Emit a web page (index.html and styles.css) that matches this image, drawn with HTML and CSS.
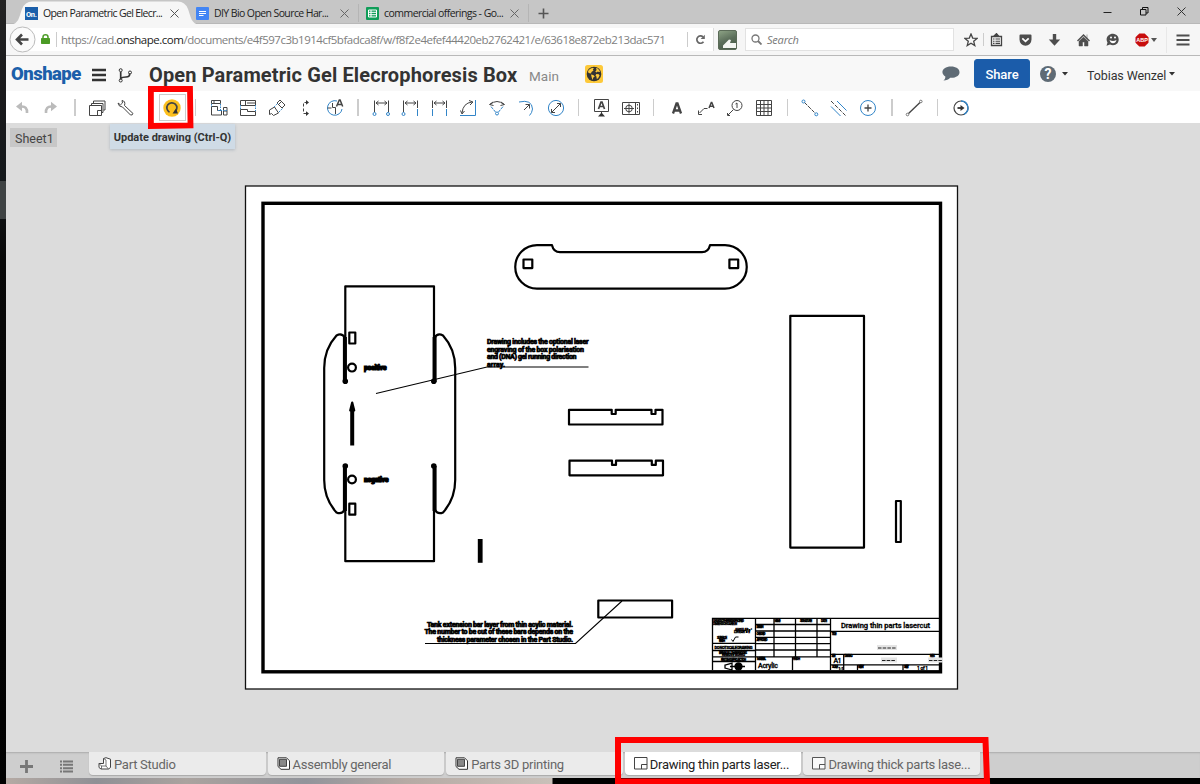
FILE: index.html
```html
<!DOCTYPE html>
<html lang="en">
<head>
<meta charset="utf-8">
<title>Open Parametric Gel Elecrophoresis Box</title>
<link rel="stylesheet" href="styles.css">
</head>
<body>
<div class="desktop">
<div class="edge"><div class="edge-light"></div></div>
<div class="window">
  <div class="tabstrip">
    <svg class="tabshape" width="190" height="25" viewBox="0 0 190 25"><path d="M0 25C9 24 9 17 12 9Q15 1.500 22 1.500H168Q175 1.500 178 9C181 17 181 24 190 25Z" fill="#f6f6f6"/></svg>
    <div class="btab first"><svg width="13" height="13"><rect width="13" height="13" fill="#1b5faa"/><text x="1" y="10" class="favtext">On.</text></svg><span class="t1">Open Parametric Gel Elecr...</span><svg class="x" width="9" height="9"><path d="M.5.5l8 8m0-8l-8 8" stroke="#555" fill="none"/></svg></div>
    <div class="btab second"><svg width="13" height="13"><rect width="13" height="13" rx="1" fill="#4285f4"/><path d="M3 4.500h7M3 6.500h7M3 8.500h4.500" stroke="#fff"/></svg><span class="t2">DIY Bio Open Source Har...</span><svg class="x" width="9" height="9"><path d="M.5.5l8 8m0-8l-8 8" stroke="#666" fill="none"/></svg></div>
    <i class="tabsep"></i>
    <div class="btab third"><svg width="13" height="13"><rect width="13" height="13" rx="1" fill="#0f9d58"/><path d="M2.500 3h8v7h-8zM2.500 5.300h8M2.500 7.700h8M5 3v7" stroke="#fff" fill="none"/></svg><span class="t3">commercial offerings - Go...</span><svg class="x" width="9" height="9"><path d="M.5.5l8 8m0-8l-8 8" stroke="#666" fill="none"/></svg></div>
    <i class="tabsep"></i>
    <svg class="plus" width="11" height="11"><path d="M5.500 .5v10M.5 5.500h10" stroke="#555" stroke-width="1.600"/></svg>
    <div class="wincontrols">
      <svg width="9" height="9"><path d="M.5 5.500h8" stroke="#222"/></svg>
      <svg width="9" height="9"><path d="M.5 2.500h5.500v5.500H.5zM2.500 2.500V.5h5.500V6H6" stroke="#111" fill="none"/></svg>
      <svg width="9" height="9"><path d="M.5.5l8 8m0-8l-8 8" stroke="#333"/></svg>
    </div>
  </div>
  <div class="navbar">
    <div class="urlbox">
      <svg class="back" width="27" height="27" viewBox="0 0 27 27"><circle cx="13.500" cy="13.500" r="12.500" fill="#fbfbfb" stroke="#bbb"/><path d="M19.500 13.500H9M13 8.500l-5 5 5 5" fill="none" stroke="#444" stroke-width="2.600"/></svg>
      <svg class="lock" width="9" height="11"><path d="M2 5V3a2.500 2.200 0 0 1 5 0v2" fill="none" stroke="#4b9b25" stroke-width="1.500"/><rect y="4" width="9" height="6" rx=".7" fill="#4b9b25"/></svg>
      <i class="bar"></i>
      <span class="url">https://cad.<b>onshape.com</b>/documents/e4f597c3b1914cf5bfadca8f/w/f8f2e4efef44420eb2762421/e/63618e872eb213dac571</span>
      <i class="bar urlend"></i>
      <svg class="reload" width="11" height="11" viewBox="0 0 11 11"><path d="M8.500 7.800A3.700 3.700 0 1 1 8 2.800" fill="none" stroke="#666" stroke-width="1.700"/><path d="M9.800 .8V5H5.600z" fill="#666"/></svg>
    </div>
    <svg class="thumb" width="19" height="20"><defs><linearGradient id="g" x2=".4" y2="1"><stop stop-color="#8fa587"/><stop offset=".6" stop-color="#5b6e5a"/><stop offset="1" stop-color="#4c5f4c"/></linearGradient></defs><rect x=".5" y=".5" width="18" height="19" rx="1.500" fill="url(#g)" stroke="#5b6b58"/><path d="M5 18v-2.500l6-6 2 .5-1 3h6v5z" fill="#f4f6f2"/></svg>
    <div class="search"><svg width="11" height="11"><circle cx="4.500" cy="4.500" r="3.500" fill="none" stroke="#777" stroke-width="1.300"/><path d="M7 7l3.500 3.500" stroke="#777" stroke-width="1.800"/></svg><em>Search</em></div>
    <div class="navicons">
      <svg viewBox="0 0 14 14"><path d="M7 1l1.700 4.100 4.300.3-3.300 2.900 1.100 4.300L7 10.300l-3.800 2.300 1.100-4.300L1 5.400l4.300-.3z" fill="none" stroke="#444" stroke-width="1.300"/></svg>
      <i class="bar"></i>
      <svg viewBox="0 0 14 14"><path d="M1.500 3.500h10v9h-10z" fill="none" stroke="#444" stroke-width="1.300"/><path d="M4 3L6.500 .5 9 3.500H4zM3 6h1.500M5.500 6H10M3 8.200h1.500M5.500 8.200H10M3 10.400h1.500M5.500 10.400H10" stroke="#444" fill="#444" stroke-width="1.100"/></svg>
      <svg viewBox="0 0 14 14"><path d="M.5 2.500q0-1 1-1h10q1 0 1 1v4a6 6.200 0 0 1-12 0z" fill="#4d4d4d"/><path d="M3.300 5.300L6.500 8.400l3.200-3.100" fill="none" stroke="#fff" stroke-width="1.700"/></svg>
      <svg viewBox="0 0 14 14"><path d="M4.800 1h3.400v5.500h4L6.500 12.800.8 6.500h4z" fill="#4d4d4d"/></svg>
      <svg viewBox="0 0 14 14"><path d="M.5 8L6.500 2l6 6" fill="none" stroke="#4d4d4d" stroke-width="1.400"/><path d="M10 1.500v4M2 8.300L6.500 4 11 8.300V13H7.500V9h-2v4H2z" fill="#4d4d4d" stroke="#4d4d4d" stroke-width=".5"/></svg>
      <svg viewBox="0 0 14 14"><path d="M7 .8c8 .7 7.200 11.400 0 11.400-1 0-2-.2-3-.7L.5 12.700l1-3.100C-1 5.500 2 .8 7 .8z" fill="#4d4d4d"/><circle cx="5" cy="4.500" r="1" fill="#fff"/><circle cx="9" cy="4.500" r="1" fill="#fff"/><path d="M3.500 7q3.500 2 7 0-1 3.300-3.500 3.300T3.500 7z" fill="#fff"/></svg>
      <svg class="abp" viewBox="0 0 14 14"><path d="M4.300.5h5.400L13.500 4.300v5.400L9.700 13.500H4.300L.5 9.700V4.300z" fill="#c70d0d"/><text x="7" y="9.300" class="abptext">ABP</text></svg>
      <svg class="caret" viewBox="0 0 6 4"><path d="M0 0h6L3 4z" fill="#555"/></svg>
      <i class="bar faint"></i>
      <svg class="burger" viewBox="0 0 14 14"><path d="M.5 2.500h13M.5 7h13M.5 11.500h13" stroke="#4d4d4d" stroke-width="2.200"/></svg>
    </div>
  </div>
  <div class="header">
    <span class="brand">Onshape</span>
    <svg class="hburger" width="14" height="14"><path d="M0 2h14M0 7h14M0 12h14" stroke="#333" stroke-width="2.400"/></svg>
    <svg class="branch" width="15" height="15" viewBox="0 0 15 15"><path d="M2.700 4v7.500M2.700 10.500Q4 9 8 9t3.600-3.500" stroke="#333" stroke-width="1.700" fill="none"/><circle cx="2.700" cy="2.200" r="1.500" fill="none" stroke="#333"/><circle cx="2.700" cy="12.500" r="1.500" fill="none" stroke="#333"/><circle cx="12" cy="4.500" r="1.500" fill="none" stroke="#333"/></svg>
    <h1>Open Parametric Gel Elecrophoresis Box</h1>
    <span class="branchname">Main</span>
    <svg class="globe" width="18" height="18" viewBox="0 0 18 18"><rect width="18" height="18" rx="2.500" fill="#fdc93a"/><circle cx="9" cy="9" r="7.300" fill="#333"/><path d="M3 6Q4.500 3.500 7.500 2.700L9 3.500 7.800 4.500 8.500 5.500 6.500 7 6 8.500 4.800 8.300 3.500 8zM11 3l1.800.5 2.400 3-1.200.5-1.200-.6-1.300 1-1.200-1 1.300-1.400zM6 9.600l2.300.5 1.500 1.300-1.500 1.200L7.600 15l-.9-2.500zM11.300 9l2.500.2.800 1.200-1.600 3-1.300.3-.3-2.300-.9-1z" fill="#fdc93a"/></svg>
    <div class="account">
      <svg class="bubble" width="18" height="15" viewBox="0 0 18 15"><path d="M9 .5c5 0 8.500 2.300 8.500 5.700s-4 6-9.300 5.500C6.500 13.500 4.500 14.500 1.500 14.500c1.300-1 2-2.500 1.800-4C-2.500 6.500 1 .5 9 .5z" fill="#5f6b75"/></svg>
      <button class="share">Share</button>
      <svg class="help" width="16" height="16"><circle cx="8" cy="8" r="8" fill="#5f6b75"/><text x="8" y="13" class="q">?</text></svg>
      <svg class="c1" width="6" height="4"><path d="M0 0h6L3 3.500z" fill="#333"/></svg>
      <span class="user">Tobias Wenzel</span>
      <svg class="c2" width="6" height="4"><path d="M0 0h6L3 3.500z" fill="#333"/></svg>
    </div>
  </div>
  <div class="toolbar">
    <div class="tool"><svg class="ic dim"><path d="M12 11.500Q18.500 11 18 18" stroke-width="2.600"/><path d="M7 11.500l6-4.800v9.600z" fill="#bbb" stroke="none"/></svg></div>
    <div class="tool"><svg class="ic dim"><path d="M14 11.500Q7.500 11 8 18" stroke-width="2.600"/><path d="M19 11.500l-6-4.800v9.600z" fill="#bbb" stroke="none"/></svg></div>
    <i class="sep"></i>
    <div class="tool"><svg class="ic"><path d="M5.500 10.500h12v10h-12zM7.500 10V8.500h11.500v9H18M9.500 8V6h11.500v9h-1.500M13.500 20v-4.500h4"/></svg></div>
    <div class="tool"><svg class="ic"><path d="M11.500 10.500l8.500 8q-.5 2-2.500 1.500L9.500 12q-3.800 0-4.500-4l2.500 1.800 2-1.800L9 5.500q3.800.5 2.500 5z"/></svg></div>
    <i class="sep"></i>
    <div class="tool"><div class="pressed"><svg class="ic"><circle cx="13" cy="13" r="8.700" fill="#fdc01e" stroke="none"/><path d="M10.500 17.200A5 5 0 1 1 16 16.700" stroke-width="1.700"/><path d="M13.500 18.500h5.500L17 13.500z" fill="#333" stroke="none"/></svg></div></div>
    <i class="sep"></i>
    <div class="tool"><svg class="ic"><path d="M5.500 5.500h9v3h-9zM8 5.500v3M5.500 11.500h6v4h4v4.500h-10zM17.500 12.500h3.500v7.500h-3.500zM17.500 16h3.500"/><path class="bl" d="M5.500 9v3M14.500 9v6.500M12 15.500h9"/></svg></div>
    <div class="tool"><svg class="ic"><path d="M5.500 5.500h15v5h-15zM10.500 5.500v5M12 8h8M5.500 14.500h7v2h8v4h-15z"/><path class="bl" d="M5.500 10v5M20.500 10v6"/></svg></div>
    <div class="tool"><svg class="ic"><path d="M5.500 15l5-3 4 6-5 2.500-2-2-2 1zM13 8l3-3 5 5-3 3zM14 10l3-3"/><path class="bl" d="M10 12l4-4M15 17l4-4"/></svg></div>
    <div class="tool"><svg class="ic"><path d="M14.500 7.500h-4v11h4" stroke-dasharray="3 2"/><path d="M13 5l3 2.500-3 2.300zM13 16.200l3 2.300-3 2.500z" fill="#333" stroke="none"/></svg></div>
    <div class="tool"><svg class="ic"><path class="bl2" d="M15 6A7.300 7.300 0 1 0 20 14"/><path d="M5.500 13h4M10.500 8v4.500h3v6.500"/><path d="M14.500 11.500L17.300 5h.8l2.600 6.500M15.500 9.500h4" stroke-width="1.500"/></svg></div>
    <i class="sep"></i>
    <div class="tool"><svg class="ic"><path d="M6.500 17V5.500M20.500 17V5.500M8 8h11M10.500 6L8 8l2.500 2M16.500 6L19 8l-2.500 2"/><circle class="bl2" cx="6.500" cy="19" r="1.500"/><circle class="bl2" cx="20" cy="19" r="1.500"/></svg></div>
    <div class="tool"><svg class="ic"><path d="M6.500 17V5.500M20.500 13V5.500M8 8h11M10.500 6L8 8l2.500 2M16.500 6L19 8l-2.500 2"/><path class="bl2" d="M20.500 14v7"/><circle class="bl2" cx="6.500" cy="19" r="1.500"/></svg></div>
    <div class="tool"><svg class="ic"><path d="M6.500 13V5.500M20.500 13V5.500M8 8h11M10.500 6L8 8l2.500 2M16.500 6L19 8l-2.500 2"/><path class="bl2" d="M6.500 14v7M20.500 14v7"/></svg></div>
    <div class="tool"><svg class="ic"><path d="M7 18Q8 8 17 7M14 5.500L18 7l-3 3M5.500 15.500L7 19l2.500-3"/><path class="bl2" d="M5 20.500h15.500V5"/></svg></div>
    <div class="tool"><svg class="ic"><path d="M6 9.500Q13 3.500 20 9.500M9 7L5.500 9.500l4 1M17 7l3.500 2.500-4 1"/><circle class="bl2" cx="13" cy="18.500" r="1.500"/><path class="bl2" d="M11.500 17L6.500 11M14.500 17l5-6" stroke-dasharray="3 1"/></svg></div>
    <div class="tool"><svg class="ic"><path class="bl2" d="M6 7Q19 4 19.500 14 19 18 16.500 20.500"/><path d="M11 15l5.500-5.500M12.500 9.500h4v4"/></svg></div>
    <div class="tool"><svg class="ic"><circle class="bl2" cx="13" cy="13" r="7.600"/><path d="M8.500 17.500l9-9M14 8.500h3.500V12M8.500 14v3.500H12"/></svg></div>
    <i class="sep"></i>
    <div class="tool"><svg class="ic"><path d="M5.500 4.500h14v12h-14zM12.500 16v2"/><path d="M9 21.500l3.500-4 3.500 4z" fill="#333" stroke="none"/><path d="M9.500 14L12 7h1l2.500 7M10.500 11.500h4" stroke-width="1.700"/></svg></div>
    <div class="tool"><svg class="ic"><path d="M4.500 7.500h17v12h-17zM17.500 7.500v12"/><circle cx="11" cy="13.500" r="3.300"/><path d="M6 13.500h10M11 8.500v10" /><path d="M19.500 9v9" stroke-dasharray="1.500 2"/></svg></div>
    <i class="sep"></i>
    <div class="tool"><svg class="ic"><path d="M9 18.500L12.500 8.500h1L17 18.500M10.500 15.500h5" stroke-width="2.300"/></svg></div>
    <div class="tool"><svg class="ic"><path d="M6.500 18l4.500-4.500h3.500M5.500 15.500v4H9"/><path d="M16 13l2.300-5.500h.5L21 13M17 11.300h3" stroke-width="1.500"/></svg></div>
    <div class="tool"><svg class="ic"><circle cx="15" cy="10.500" r="5"/><path d="M11.500 14.500L6 20M15 13V8l-1.500 1M5.500 18v2.500H8"/></svg></div>
    <div class="tool"><svg class="ic"><path d="M5.500 5.500h15v15h-15zM5.500 9.500h15M5.500 13h15M5.500 16.500h15M9.500 5.500v15M13 5.500v15M17 5.500v15"/></svg></div>
    <i class="sep"></i>
    <div class="tool"><svg class="ic"><path d="M7.500 7.500l10.500 10.500" stroke-dasharray="4 1"/><circle class="bl2" cx="6.500" cy="6.500" r="1.500"/><circle class="bl2" cx="19.300" cy="19.300" r="1.500"/></svg></div>
    <div class="tool"><svg class="ic"><path d="M5 6l15 15" stroke-dasharray="4 1.500"/><path class="bl2" d="M11 6l9.500 9.500M5 11.500l9.500 9.500"/></svg></div>
    <div class="tool"><svg class="ic"><circle class="bl2" cx="13" cy="13" r="7.500"/><path d="M13 9.500v7M9.500 13h7" stroke-width="1.300"/></svg></div>
    <i class="sep"></i>
    <div class="tool"><svg class="ic"><path d="M7 19L19.500 7" stroke-width="1.400"/><circle cx="6.500" cy="19.500" r="1.300" fill="#fff" stroke="#777"/><circle cx="19.800" cy="6.500" r="1.300" fill="#fff" stroke="#777"/></svg></div>
    <i class="sep"></i>
    <div class="tool"><svg class="ic"><circle cx="13" cy="13" r="7" stroke-width="1.200"/><path class="bl2" d="M13 6a7 7 0 0 1 3 13.300" stroke-width="1.400"/><path d="M9.500 13h4" stroke-width="2"/><path d="M12.500 10l4 3-4 3z" fill="#333" stroke="none"/></svg></div>
  </div>
  <div class="canvas">
    <span class="sheetname">Sheet1</span>
    <svg class="sheet" width="1194" height="629" viewBox="6 123 1194 629">
      <rect x="245.500" y="186" width="712" height="503" fill="#fff" stroke="#111" stroke-width="1.300"/>
      <rect x="263" y="203.300" width="677.500" height="468.500" class="ln" stroke-width="3.400"/>
      <g class="ln heavy">
        <path d="M345.300 382V286.300H434V382M345.300 465V561.200H434V465"/>
        <path d="M345 338Q342 332.500 336.500 335.500Q324.200 349 324.200 368V480Q324.200 499 336.500 512.500Q342 515 345 509"/>
        <path d="M434.500 338Q437.500 332.500 443 335.500Q455.200 349 455.200 368V480Q455.200 499 443 512.500Q437.500 515 434.500 509"/>
        <path d="M344.900 337V382M434.600 337V382M344.900 466V511M434.600 466V511" stroke-width="4"/>
        <circle cx="345.300" cy="381.300" r="1.700"/><circle cx="433.800" cy="381.300" r="1.700"/><circle cx="345.300" cy="466" r="1.700"/><circle cx="433.800" cy="466" r="1.700"/>
        <rect x="349.300" y="332.500" width="6" height="11"/><rect x="349.300" y="503.700" width="6" height="11"/>
        <circle cx="352" cy="367.600" r="3.900"/><circle cx="352" cy="479.500" r="3.900"/>
        <path d="M352.200 408V445.500" stroke-width="4"/><path d="M352.200 402.500l2 8h-4z" fill="#000"/>
        <path d="M537 245.200H552C553 249.500 556 252.200 560 252.200H702C706 252.200 709 249.500 710 245.200H725A21.700 21.700 0 0 1 725 288.700H537A21.700 21.700 0 0 1 537 245.200Z"/>
        <rect x="523.500" y="259.500" width="8.800" height="8.600"/><rect x="729.400" y="259.500" width="8.800" height="8.600"/>
        <path d="M569 409.800H611.700V414H615.700V409.800H651.500V414H655.500V409.800H662.500V424.500H569Z"/>
        <path d="M569.500 460.700H612V464.900H616V460.700H651.800V464.900H655.800V460.700H663V475.300H569.500Z"/>
        <rect x="790.300" y="315.800" width="73.700" height="231.800"/>
        <rect x="896" y="501" width="4.800" height="41"/>
        <path d="M480.200 539V562.800" stroke-width="4.800"/>
        <rect x="598.300" y="600.500" width="73.800" height="17"/>
      </g>
      <path d="M376 393.500L487 367H588.500M622 601L575.500 643.500H425" class="ln" stroke-width="1.100"/>
      <g class="note">
        <text class="engraved" x="364" y="370" textLength="22.500">positive</text>
        <text class="engraved" x="364" y="482" textLength="24.500">negative</text>
        <text x="487" y="344.300" textLength="101.500">Drawing includes the optional laser</text>
        <text x="487" y="351.800" textLength="97">engraving of the box polarisation</text>
        <text x="487" y="359.300" textLength="89.500">and (DNA) gel running direction</text>
        <text x="487" y="366.800" textLength="18">array.</text>
        <text x="427" y="627" textLength="146">Tank extension bar layer from thin acylic material.</text>
        <text x="424.500" y="634.400" textLength="148.500">The number to be cut of these bars depends on the</text>
        <text x="437" y="641.700" textLength="136">thickness parameter chosen in the Part Studio.</text>
      </g>
      <g class="ln fine">
        <path d="M712.500 670V618.300H940M755.500 618V670M774 618V656.500M795.500 618V656.500M817 618V656.500M830.500 618V670M712 643.300H755.500M712 650.500H755.500M712 656.800H830.500M712 661.500H755.500M755.500 624.500H830.500M755.500 631H830.500M755.500 637.300H830.500M755.500 643.700H830.500M755.500 650H830.500M830.500 631.300H940M830.500 654.300H940M830.500 664.800H940M843.700 654V670M792.500 657V670M857.500 665V670M903 665V670"/>
        <path d="M725 665l7-2v7l-7-2zM730 666.500h15"/><circle cx="738.500" cy="666.500" r="3.500" fill="#000"/>
        <path d="M731.500 639.500l1.500 2 2.500-4.500h3" stroke-width="1"/>
      </g>
      <g fill="#e4e4e4"><path d="M877 645h20v5h-20zM881 657.500h16v5h-16zM928 657.500h15v5h-15z"/></g>
      <path d="M878 648h18M882 660.500h14M929 660.500h14" stroke="#222" stroke-dasharray="3.500 1.200"/>
      <g class="title">
        <text x="841" y="628" textLength="89" font-size="7.500">Drawing thin parts lasercut</text>
        <text x="833.500" y="663.300" textLength="8" font-size="7">A1</text>
        <text x="758" y="668" textLength="20" font-size="7">Acrylic</text>
        <text x="917" y="669.700" textLength="11" font-size="4.800">1 of 1</text>
      </g>
      <g class="tiny">
        <text x="713" y="621.500" textLength="31">UNLESS OTHERWISE SPECIFIED</text><text x="713" y="624.500" textLength="24">DIMENSIONS ARE IN</text>
        <text x="735" y="630.500" textLength="17">ANGULAR = °</text><text x="734" y="633" textLength="16">LINEAR = ±</text>
        <text x="717" y="638.500" textLength="10">SURFACE</text><text x="719" y="641.500" textLength="6">FINISH</text>
        <text x="714.500" y="648.500" textLength="38" font-size="4">DO NOT SCALE DRAWING</text>
        <text x="719" y="653.500" textLength="28">BREAK ALL SHARP EDGES</text><text x="722" y="656" textLength="23">REMOVE BURRS</text><text x="721" y="660.500" textLength="25">FIRST ANGLE PROJECTION</text>
        <text x="774.500" y="621.500" textLength="6">NAME</text><text x="800" y="621.500" textLength="12">SIGNATURE</text><text x="821" y="621.500" textLength="6">DATE</text>
        <text x="756.500" y="628" textLength="7">DRAWN</text><text x="756.500" y="634.500" textLength="9">CHECKED</text><text x="756.500" y="641" textLength="11">APPROVED</text>
        <text x="831.500" y="634.500" textLength="5">TITLE</text><text x="831.500" y="657" textLength="4">SIZE</text><text x="844.500" y="657" textLength="8">DWG NO.</text><text x="930" y="657" textLength="5">REV.</text>
        <text x="757" y="660" textLength="9">MATERIAL</text><text x="793" y="660" textLength="7">FINISH</text><text x="832" y="668" textLength="6">SCALE</text><text x="838.500" y="669.500" textLength="5">1:1</text><text x="858" y="668" textLength="6">WEIGHT</text><text x="904" y="668" textLength="5">SHEET</text>
      </g>
    </svg>
  </div>
  <div class="doctabs">
    <div class="tabtools"><svg width="13" height="13"><path d="M6.500 0v13M0 6.500h13" stroke="#777" stroke-width="2.800"/></svg><svg width="13" height="13"><path d="M3 1.500H13M3 4.800H13M3 8.200H13M3 11.500H13M0 1.500h2M0 4.800h2M0 8.200h2M0 11.500h2" stroke="#777" stroke-width="2"/></svg></div>
    <div class="dtab"><svg width="14" height="13"><path d="M1 6.500H5.500V1.500L8 .7l4.500 1.500v8.300L10.500 12H3L1 10.500z" fill="#fff" stroke="#444"/><path d="M5.500 1.500L8 3v6H3.500L1 6.500M3.500 9v3M8 9l2.500 3" fill="none" stroke="#555" stroke-width=".8"/></svg><span>Part Studio</span></div>
    <div class="dtab"><svg width="14" height="13"><path d="M1 .8h8.500l3 3v8.500H4L1 9.500z" fill="#fff" stroke="#333"/><path d="M1 .8h7v7H1z" fill="#888" stroke="#444" transform="translate(1.500 1.500)"/></svg><span>Assembly general</span></div>
    <div class="dtab"><svg width="14" height="13"><path d="M1 .8h8.500l3 3v8.500H4L1 9.500z" fill="#fff" stroke="#333"/><path d="M1 .8h7v7H1z" fill="#888" stroke="#444" transform="translate(1.500 1.500)"/></svg><span>Parts 3D printing</span></div>
    <div class="dtab active"><svg width="14" height="13"><path d="M.5 .5h12.500v11.500H.5zM7.500 12V7.500H13" fill="none" stroke="#444"/></svg><span>Drawing thin parts laser...</span></div>
    <div class="dtab"><svg width="14" height="13"><path d="M.5 .5h12.500v11.500H.5zM7.500 12V7.500H13" fill="#fafafa" stroke="#555"/></svg><span>Drawing thick parts lase...</span></div>
  </div>
  <div class="wallpaper"></div>
</div>
<div class="tooltip">Update drawing (Ctrl-Q)</div>
<svg class="mark-update" width="46" height="45"><path d="M2.900 3H42L42.500 39.500 2.900 40Z" fill="none" stroke="#f00" stroke-width="5.800"/></svg>
<svg class="mark-tabs" width="376" height="48"><path d="M3 3H370.500L372 44.500H3Z" fill="none" stroke="#f00" stroke-width="6"/></svg>
</div>
</body>
</html>
```
FILE: styles.css
```css
* { box-sizing: border-box; }
body { margin: 0; font-family: Roboto, "Liberation Sans", sans-serif; color: #333; }
svg { display: block; flex: none; }
i { display: block; flex: none; }
span, h1, em { white-space: nowrap; }
.desktop { position: relative; display: flex; width: 1200px; height: 784px; overflow: hidden; background: #111; }
.edge { width: 6px; flex: none; background: linear-gradient(#222 0, #1b1b1d 90px, #14181b 180px, #080808 260px, #000 100%); padding-top: 181px; }
.edge-light { height: 38px; background: #3f4344; }
.window { display: flex; flex-direction: column; width: 1194px; flex: none; }

.tabstrip { position: relative; height: 24px; flex: none; display: flex; align-items: center; background: #c6c6c6; border-bottom: 1px solid #b8b8b8; padding: 3px 14px 0 19px; font: 10.5px "Open Sans", "Noto Sans", sans-serif; color: #222; }
.tabshape { position: absolute; left: 4px; top: 0; }
.btab { position: relative; display: flex; align-items: center; height: 20px; flex: none; }
.btab span { margin-left: 5px; }
.btab .x { margin-left: auto; }
.first { width: 154px; }
.second { width: 153px; margin-left: 17px; }
.third { width: 153px; margin-left: 7px; }
.tabsep { width: 1px; height: 18px; margin-left: 9px; background: #b5b5b5; }
.t1 { letter-spacing: -.63px; }
.t2 { letter-spacing: -.6px; }
.t3 { letter-spacing: -.54px; }
.plus { margin-left: 9px; }
.wincontrols { margin-left: auto; display: flex; gap: 28px; padding-bottom: 4px; }
.favtext { font: bold 7.500px Roboto, sans-serif; fill: #fff; letter-spacing: -.3px; }

.navbar { height: 32px; flex: none; display: flex; align-items: center; background: #f6f6f6; border-bottom: 1px solid #b9b9b9; font: 11.5px "Open Sans", "Noto Sans", sans-serif; }
.urlbox { width: 708px; height: 23px; display: flex; align-items: center; background: linear-gradient(90deg, transparent 24px, #fff 24px); border-right: 1px solid #ddd; }
.back { margin-left: 3px; }
.lock { margin-left: 5px; }
.bar { width: 1px; height: 15px; background: #ccc; }
.lock + .bar { margin-left: 6px; }
.url { width: 605px; margin-left: 4px; color: #808080; letter-spacing: -.49px; }
.url b { font-weight: 400; color: #222; }
.urlend { margin-left: 21px; }
.reload { margin-left: 7px; }
.thumb { margin-left: 4px; }
.search { width: 209px; height: 23px; margin-left: 8px; display: flex; align-items: center; gap: 5px; padding-left: 5px; background: #fff; border: 1px solid #e2e2e2; color: #777; }
.search em { font-size: 11px; letter-spacing: -.2px; }
.navicons { display: flex; align-items: center; margin-left: 10px; }
.navicons svg { width: 14px; height: 14px; margin-right: 15px; }
.navicons svg:first-child { margin-right: 5px; }
.navicons svg:first-child + .bar { margin-right: 6px; height: 13px; }
.navicons .abp { margin-right: 2px; }
.navicons .caret { width: 6px; height: 4px; margin-right: 9px; }
.navicons .burger { margin-left: 9px; margin-right: 0; }
.faint { background: #e8e8e8; height: 26px; }
.abptext { font: bold 5.500px "Liberation Sans", sans-serif; fill: #fff; text-anchor: middle; }

.header { height: 35px; flex: none; display: flex; align-items: center; background: #f8f8f8; padding-left: 5px; }
.brand { width: 71px; color: #1b5faa; font-size: 18.5px; font-weight: 900; letter-spacing: -.52px; }
.hburger { margin-left: 10px; margin-top: 3px; }
.branch { margin: 3px 0 0 12px; }
h1 { width: 370px; margin: 3px 0 0 16px; font-size: 20px; line-height: 24px; font-weight: 700; letter-spacing: .13px; }
.branchname { width: 31px; margin: 4px 0 0 10px; font-size: 13.5px; color: #888; }
.globe { margin-left: 25px; }
.account { margin-left: auto; display: flex; align-items: center; padding-right: 25px; }
.share { width: 56px; height: 29px; margin: 0 10px 0 14px; padding: 1px 0 0; border: 1px solid #1b5faa; border-radius: 3px; background: #1b5caa; color: #fff; font: 500 13px Roboto, sans-serif; letter-spacing: -.1px; }
.q { font: bold 14px Roboto, sans-serif; fill: #fff; text-anchor: middle; }
.c1 { margin-left: 6px; }
.user { width: 79px; margin: 3px 0 0 19px; font-size: 12.5px; letter-spacing: -.1px; }
.c2 { margin-left: 3px; }

.toolbar { height: 32px; flex: none; display: flex; align-items: center; background: #fff; padding: 1px 0 0 1.500px; }
.tool { width: 29.1px; flex: none; display: flex; justify-content: center; }
.ic { width: 26px; height: 26px; fill: none; stroke: #444; stroke-width: 1; }
.dim { stroke: #bbb; }
.bl, .bl2 { stroke: #3285c8; }
.bl { stroke-dasharray: 1.500 1; }
.sep { width: 17px; height: 17px; background: linear-gradient(90deg, transparent 8px, #ccc 8px, #ccc 9.500px, transparent 9.500px); }
.pressed { width: 27px; height: 27px; border: 1px solid #ccc; display: flex; justify-content: center; align-items: center; }

.canvas { position: relative; height: 629px; flex: none; background: #dcdcdc; }
.sheetname { position: absolute; left: 4px; top: 5px; width: 47px; height: 19px; background: #c7c7c7; color: #444; font: 12.5px/21px Roboto, sans-serif; padding-left: 5px; }
.ln { fill: none; stroke: #000; }
.heavy { stroke-width: 2.200; stroke-linejoin: round; }
.fine { stroke-width: 1.300; }
.sheet text { font-family: Roboto, sans-serif; fill: #000; }
.note { font-size: 7px; font-weight: 700; stroke: #000; stroke-width: .7; }
.engraved { stroke-width: 1.200; }
.title { font-weight: 500; stroke: #000; stroke-width: .3; }
.tiny { font-size: 3.300px; font-weight: 700; stroke: #000; stroke-width: .35; }

.doctabs { height: 26px; flex: none; display: flex; gap: 2px; background: #cecece; box-shadow: inset 0 2px 2px -1px #aaa; }
.tabtools { width: 81px; flex: none; display: flex; align-items: center; gap: 27px; padding: 3px 0 0 14px; }
.dtab { width: 176.6px; height: 23px; flex: none; display: flex; align-items: center; padding-left: 9px; gap: 2px; background: #ebebeb; border-radius: 0 0 4px 4px; box-shadow: 0 1px 1px #aaa; color: #666; font-size: 13px; letter-spacing: -.26px; }
.dtab span { padding-top: 2px; }
.active { background: #fff; color: #222; }
.wallpaper { height: 6px; flex: none; background: linear-gradient(90deg, #b5aaa4, #8f9095 90px, #aaa39f 180px, #92949b 300px, #b5aaa4 400px, #c9c0b9 546px, #000 547px); }

.tooltip { position: absolute; left: 110px; top: 124px; width: 125px; height: 25px; background: #cfdbe6; box-shadow: 0 1px 3px #b0b8c0; font-size: 11px; line-height: 27px; font-weight: 700; text-align: center; white-space: nowrap; }
.mark-update { position: absolute; left: 148px; top: 86px; }
.mark-tabs { position: absolute; left: 615px; top: 737px; }
```
